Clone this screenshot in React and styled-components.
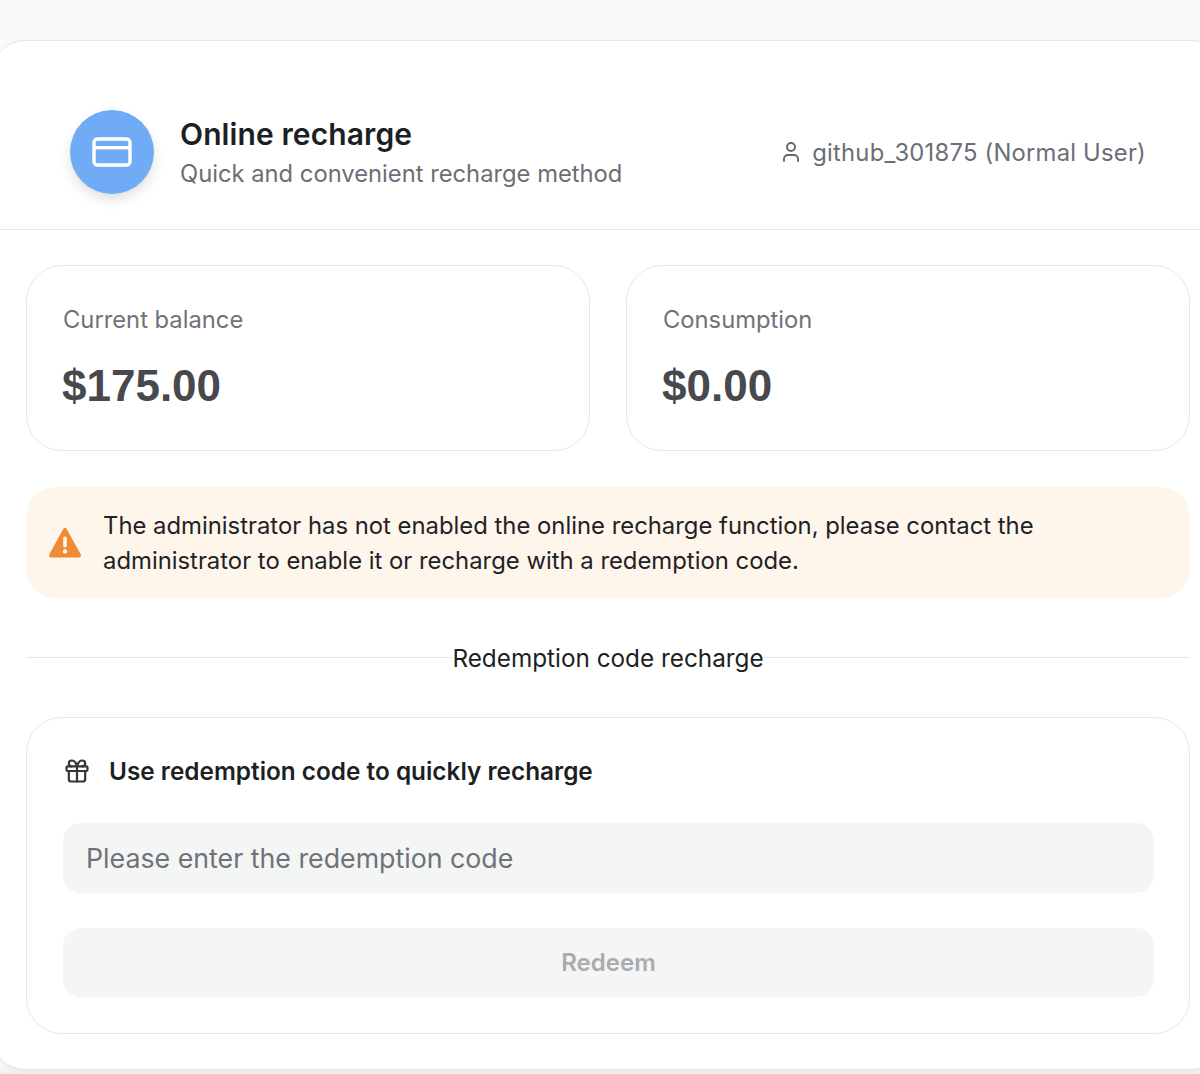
import React from 'react';
import styled, { createGlobalStyle } from 'styled-components';
import { Gift, User } from 'lucide-react';

const GlobalStyle = createGlobalStyle`
    * { box-sizing: border-box; }
    html, body {
        margin: 0;
        height: 1074px;
        overflow: hidden;
        background: #fafafa;
        font-family: Inter, "Liberation Sans", sans-serif;
    }
`

const App = () => {
    return (
        <>
            <GlobalStyle />
            <Page>
                <Panel>
                    <Header>
                        <TitleGroup>
                            <IconCircle>
                                <svg width="40" height="30" viewBox="0 0 40 30" fill="none">
                                    <rect x="2" y="2" width="36" height="26" rx="3.5" stroke="#fff" strokeWidth="3.4" />
                                    <rect x="2" y="9" width="36" height="3.4" fill="#fff" />
                                </svg>
                            </IconCircle>
                            <div>
                                <Title>Online recharge</Title>
                                <Subtitle>Quick and convenient recharge method</Subtitle>
                            </div>
                        </TitleGroup>
                        <UserInfo>
                            <User size={24} strokeWidth={1.9} />
                            <span>github_301875 (Normal User)</span>
                        </UserInfo>
                    </Header>
                    <Body>
                        <StatsRow>
                            <StatCard>
                                <StatLabel>Current balance</StatLabel>
                                <StatValue>$175.00</StatValue>
                            </StatCard>
                            <StatCard>
                                <StatLabel>Consumption</StatLabel>
                                <StatValue>$0.00</StatValue>
                            </StatCard>
                        </StatsRow>
                        <Notice>
                            <svg width="34" height="32" viewBox="0 0 34 32">
                                <path d="M17 3 L31 28.5 H3 Z" fill="#ef8b35" stroke="#ef8b35" strokeWidth="4" strokeLinejoin="round" />
                                <rect x="15.2" y="9.5" width="3.6" height="11" rx="1.8" fill="#fef6eb" />
                                <circle cx="17" cy="24.4" r="2.2" fill="#fef6eb" />
                            </svg>
                            <NoticeText>
                                The administrator has not enabled the online recharge function, please contact the administrator to enable it or recharge with a redemption code.
                            </NoticeText>
                        </Notice>
                        <Divider>
                            <span>Redemption code recharge</span>
                        </Divider>
                        <RedeemCard>
                            <RedeemTitle>
                                <Gift size={28} strokeWidth={1.9} />
                                <span>Use redemption code to quickly recharge</span>
                            </RedeemTitle>
                            <CodeInput placeholder="Please enter the redemption code" />
                            <RedeemButton disabled>Redeem</RedeemButton>
                        </RedeemCard>
                    </Body>
                </Panel>
            </Page>
        </>
    )
}

const Page = styled.div`
    height: 1074px;
    padding-top: 40px;
    margin-left: -10px;
    width: 1236px;
    background: linear-gradient(to bottom, #fafafa 0, #fafafa 1060px, #f0f0f0 1074px);
`
const Panel = styled.div`
    height: 1030px;
    background: #fff;
    border: 1px solid #e6e7e8;
    border-radius: 36px;
    box-shadow: 0 1px 4px rgba(0, 0, 0, 0.05);
`
const Header = styled.div`
    height: 189px;
    padding: 69px 79px 0 79px;
    display: flex;
    justify-content: space-between;
    border-bottom: 1px solid #e6e7e8;
`
const TitleGroup = styled.div`
    display: flex;
    gap: 26px;
`
const IconCircle = styled.div`
    width: 84px;
    height: 84px;
    border-radius: 50%;
    background: #70abf6;
    box-shadow: 0 6px 12px rgba(0, 0, 0, 0.12);
    display: flex;
    align-items: center;
    justify-content: center;
`
const Title = styled.h1`
    margin: 5px 0 0 0;
    font-size: 30px;
    line-height: 38px;
    font-weight: 600;
    letter-spacing: 0.1px;
    color: #1c1f23;
`
const Subtitle = styled.div`
    margin-top: 5px;
    font-size: 23.75px;
    line-height: 32px;
    color: #6b6f75;
`
const UserInfo = styled.div`
    display: flex;
    align-items: center;
    gap: 9px;
    height: 84px;
    font-size: 23.8px;
    letter-spacing: 0.22px;
    color: #6b6f75;
    svg {
        color: #63676d;
    }
`
const Body = styled.div`
    padding: 35px 35px 0 35px;
`
const StatsRow = styled.div`
    display: grid;
    grid-template-columns: 1fr 1fr;
    gap: 36px;
`
const StatCard = styled.div`
    height: 186px;
    padding: 38px 36px 0 36px;
    border: 1px solid #e6e7e8;
    border-radius: 36px;
`
const StatLabel = styled.div`
    font-size: 23.75px;
    line-height: 32px;
    color: #6f7379;
`
const StatValue = styled.div`
    margin: 24px 0 0 -1px;
    font-family: "Liberation Sans", Arial, sans-serif;
    font-size: 44px;
    line-height: 52px;
    font-weight: 700;
    color: #47494d;
`
const Notice = styled.div`
    margin-top: 36px;
    height: 111px;
    padding: 0 100px 0 22px;
    display: flex;
    align-items: center;
    gap: 21px;
    background: #fef6eb;
    border-radius: 30px;
    svg {
        flex-shrink: 0;
    }
`
const NoticeText = styled.div`
    font-size: 23.85px;
    line-height: 35px;
    color: #1f2226;
`
const Divider = styled.div`
    margin-top: 43px;
    height: 32px;
    display: flex;
    align-items: center;
    font-size: 24.3px;
    color: #1c1f23;
    span {
        padding-top: 2px;
    }
    &::before, &::after {
        content: "";
        flex: 1;
        height: 1px;
        background: #e6e7e8;
    }
`
const RedeemCard = styled.div`
    margin-top: 44px;
    height: 317px;
    padding: 35px 35px 0 36px;
    border: 1px solid #e6e7e8;
    border-radius: 36px;
`
const RedeemTitle = styled.div`
    display: flex;
    align-items: center;
    gap: 18px;
    height: 36px;
    font-size: 24.35px;
    font-weight: 600;
    color: #1c1f23;
    svg {
        flex-shrink: 0;
        color: #33363b;
    }
`
const CodeInput = styled.input`
    display: block;
    width: 100%;
    height: 70px;
    margin-top: 34px;
    padding: 0 23px;
    border: none;
    outline: none;
    border-radius: 18px;
    background: #f4f5f5;
    font-family: inherit;
    font-size: 26.75px;
    &::placeholder {
        color: #6f7379;
        opacity: 1;
    }
`
const RedeemButton = styled.button`
    display: block;
    width: 100%;
    height: 69px;
    margin-top: 35px;
    border: none;
    border-radius: 18px;
    background: #f4f5f5;
    font-family: inherit;
    font-size: 24px;
    font-weight: 600;
    color: #a9acaf;
`

export default App;
